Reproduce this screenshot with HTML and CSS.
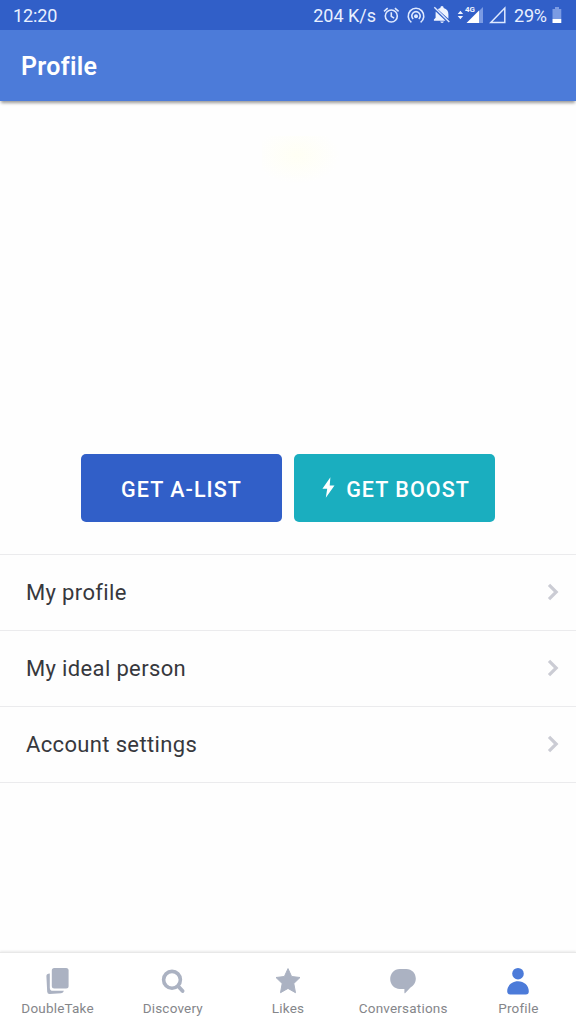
FILE: index.html
```html
<!DOCTYPE html>
<html lang="en">
<head>
<meta charset="utf-8">
<title>Profile</title>
<link rel="stylesheet" href="styles.css">
</head>
<body>
<div class="app">
  <div class="status">
    <span class="clock">12:20</span>
    <span class="speed">204 K/s</span>
    <svg class="status-icons" viewBox="382 0 126 30" width="126" height="30" fill="none" stroke="#dfe9ff" stroke-width="1.6">
      <circle cx="391.3" cy="16" r="6"/>
      <path d="M391.3 12.2v4.2l2.8 1.7M384 11.3l3.7-3.1M398.6 11.3l-3.7-3.1"/>
      <path d="M411.4 22.4a7.8 7.8 0 1 1 9.2 0M413.2 19a4.2 4.2 0 1 1 5.6 0"/>
      <circle cx="416" cy="16.2" r="2" fill="#dfe9ff" stroke="none"/>
      <path fill="#eff4ff" stroke="none" d="M437.8 9.2q1.2-.8 2.6-1.1V7.6a1.6 1.6 0 0 1 3.2 0v.5c3.3.8 4.8 3.3 4.8 6.2v4.5zM435.7 11.4l9.8 9.3H433.9v-1.1l1.7-1.8v-3.6q0-1.6.1-2.8zM440.2 21.6h3.7a1.9 1.9 0 0 1-3.7 0z"/>
      <path stroke-width="1.4" d="M434.3 7.3l15 14.8"/>
      <path fill="#eff4ff" stroke="none" d="M457.7 14l2.7-3.2 2.7 3.2zM457.7 16l2.7 3.2 2.7-3.2z"/>
      <path fill="#7b9be3" stroke="none" d="M479 11l4-4v16h-4z"/>
      <path fill="#fff" stroke="none" d="M466.5 23L479 10.5V23z"/>
      <path d="M490.8 22.6L504.8 8v14.6z" stroke-width="1.5"/>
      <text class="network" x="465" y="12">4G</text>
    </svg>
    <span class="percent">29%</span>
    <svg class="battery" viewBox="0 0 10 17" width="10" height="17">
      <path fill="#7b9be3" d="M3 0h4v2h2.3v10H.5V2H3z"/>
      <path fill="#fff" d="M.5 12h8.8v4H.5z"/>
    </svg>
  </div>
  <header class="toolbar"><h1 class="title">Profile</h1></header>
  <main class="content">
    <div class="hero"><div class="glow"></div></div>
    <div class="actions">
      <button class="button alist"><span>GET A-LIST</span></button>
      <button class="button boost">
        <svg viewBox="0 0 13 21" width="13" height="21" fill="#fff"><path d="M8.4.2L.4 11.8h4.8L3.8 20.7 12.5 8.4H7.7z"/></svg>
        <span>GET BOOST</span>
      </button>
    </div>
    <ul class="menu">
      <li class="row"><span>My profile</span><svg class="chevron" viewBox="0 0 12 18" width="12" height="18"><path d="M2 1.8l7.2 7.2L2 16.2"/></svg></li>
      <li class="row"><span>My ideal person</span><svg class="chevron" viewBox="0 0 12 18" width="12" height="18"><path d="M2 1.8l7.2 7.2L2 16.2"/></svg></li>
      <li class="row"><span>Account settings</span><svg class="chevron" viewBox="0 0 12 18" width="12" height="18"><path d="M2 1.8l7.2 7.2L2 16.2"/></svg></li>
    </ul>
  </main>
  <nav class="tabs">
    <div class="tab">
      <svg viewBox="0 0 28 28" width="28" height="28"><rect x="7.8" y="1" width="16.8" height="20.6" rx="2.5"/><path d="M5.8 6.5v14.2q0 3.1 3.1 3.1h11q-.5 2.4-2.8 2.4L5.7 27q-2.3.1-2.5-2.2L2.4 9.3Q2.3 6.6 5.8 6.5z"/></svg>
      <span>DoubleTake</span>
    </div>
    <div class="tab">
      <svg viewBox="0 0 28 28" width="28" height="28"><circle cx="13" cy="12.8" r="8.4" fill="none" stroke="#abb2c2" stroke-width="3.6"/><path d="M19.2 19.2l4.4 4.8" stroke="#abb2c2" stroke-width="3.8" stroke-linecap="round"/></svg>
      <span>Discovery</span>
    </div>
    <div class="tab">
      <svg viewBox="0 0 28 28" width="28" height="28"><path stroke="#abb2c2" stroke-linejoin="round" d="M14 1.6l3.6 7.9 8.4 1-6.2 6 1.7 9.2L14 21.4l-7.5 4.3 1.7-9.2-6.2-6 8.4-1z"/></svg>
      <span>Likes</span>
    </div>
    <div class="tab">
      <svg viewBox="0 0 28 28" width="28" height="28"><path d="M10.8 2h6.4c5.8 0 9.6 4.3 9.6 9.6 0 4.4-2.4 7.4-5.3 9l-5.2 5.5q-.9.7-.9-.6v-3.6h-4.6C5.2 21.9 1.2 17.4 1.2 12S5 2 10.8 2z"/></svg>
      <span>Conversations</span>
    </div>
    <div class="tab active">
      <svg viewBox="0 0 28 28" width="28" height="28"><circle cx="14" cy="6.7" r="5.8"/><path d="M3.2 24.2C3.2 18.5 8 14.2 14 14.2s10.8 4.3 10.8 10q0 3.2-3 3.2H6.2q-3 0-3-3.2z"/></svg>
      <span>Profile</span>
    </div>
  </nav>
</div>
</body>
</html>
```
FILE: styles.css
```css
* { box-sizing: border-box; }
body { margin: 0; background: #fff; font-family: Roboto, Arial, sans-serif; }
.app { width: 576px; height: 1024px; display: flex; flex-direction: column; overflow: hidden; background: #fefefe; }
.status { height: 30px; flex: none; display: flex; align-items: center; padding: 0 14px 0 13px; background: #315fc8; color: #e9f0ff; font: 18px/30px Roboto, sans-serif; white-space: nowrap; }
.clock { letter-spacing: -.1px; padding-top: 2px; }
.speed { margin-left: auto; padding-top: 2px; }
.status-icons { margin-left: 6px; flex: none; }
.network { font: 700 8px Roboto, sans-serif; fill: #eff4ff; stroke: none; }
.percent { margin-left: 6px; padding-top: 2px; width: 34px; letter-spacing: -.2px; }
.battery { margin-left: 4px; margin-top: 1px; flex: none; }
.toolbar { height: 71px; flex: none; display: flex; align-items: center; padding: 2px 21px 0; background: #4c7bd9; box-shadow: 0 3px 3px -1px rgba(0, 0, 0, .4); }
.title { margin: 0; color: #fff; font: 600 25px/30px Roboto, Arial, sans-serif; letter-spacing: .3px; }
.content { flex: 1; }
.hero { height: 353px; padding: 35px 0 0 262px; }
.glow { width: 78px; height: 48px; background: radial-gradient(ellipse at 45% 40%, #fffff4, #fefefe 70%); }
.actions { display: flex; justify-content: center; gap: 12px; height: 68px; }
.button { width: 201px; height: 68px; border: 0; border-radius: 5px; padding: 3px 0 0; display: flex; align-items: center; justify-content: center; gap: 11px; color: #fff; font: 500 21.5px/28px Roboto, sans-serif; letter-spacing: 1.05px; white-space: nowrap; }
.button svg { flex: none; margin-top: -5px; }
.alist { background: #315fc8; }
.boost { background: #1aaebf; padding-left: 3px; }
.menu { margin: 32px 0 0; padding: 0; list-style: none; border-top: 1px solid #ebebed; }
.row { height: 76px; display: flex; align-items: center; justify-content: space-between; padding: 0 17px 1px 26px; border-bottom: 1px solid #ebebed; color: #37383d; font-size: 22px; letter-spacing: .35px; }
.chevron { fill: none; stroke: #cbccd4; stroke-width: 3.2; }
.tabs { height: 72px; flex: none; display: flex; border-top: 1px solid #e8e8e8; box-shadow: 0 -1px 2px rgba(0, 0, 0, .08); padding-top: 14px; background: #fff; }
.tab { flex: 1; display: flex; flex-direction: column; align-items: center; color: #85868a; font-size: 13.5px; line-height: 18px; letter-spacing: .2px; }
.tab svg { fill: #abb2c2; margin-bottom: 4px; }
.tab.active svg { fill: #4c7bd9; }
```
